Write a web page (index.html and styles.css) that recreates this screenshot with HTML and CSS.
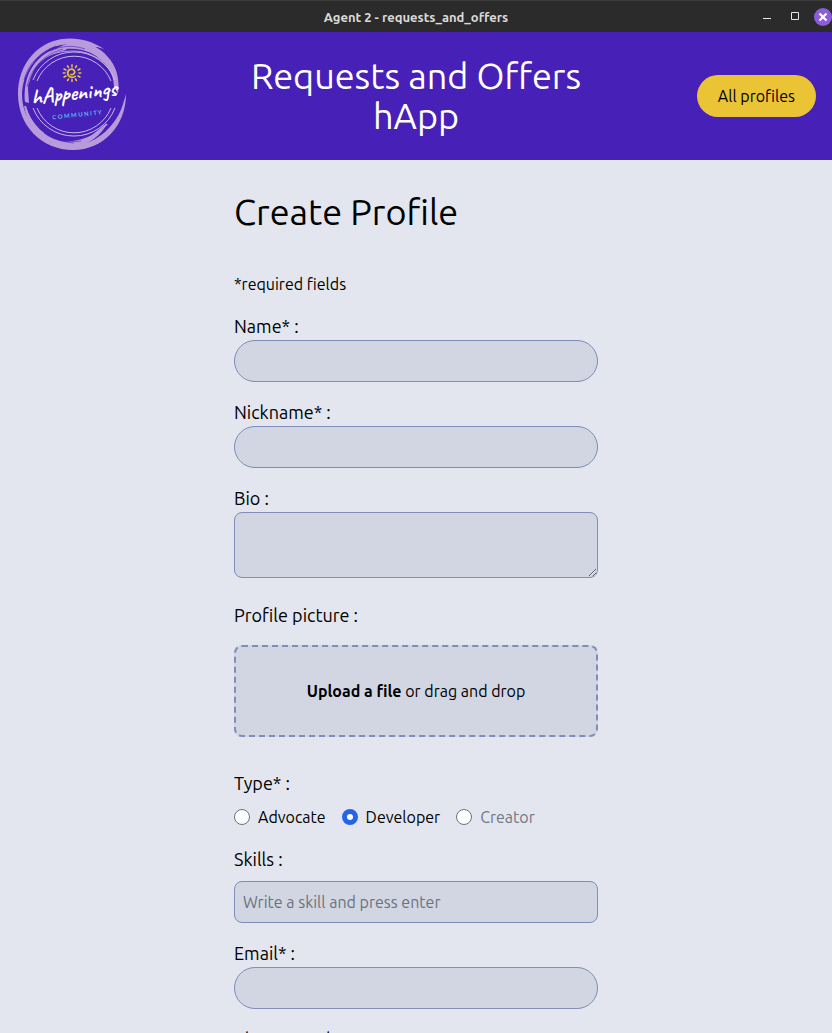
FILE: index.html
```html
<!DOCTYPE html>
<html lang="en">
<head>
<meta charset="utf-8">
<meta name="viewport" content="width=device-width, initial-scale=1">
<title>Agent 2 - requests_and_offers</title>
<link rel="stylesheet" href="styles.css">
</head>
<body>
<div class="window">
  <div class="titlebar">
    <span class="titlebar-text">Agent 2 - requests_and_offers</span>
    <div class="window-controls">
      <button class="window-button" type="button" aria-label="Minimize"><svg width="18" height="18" viewBox="0 0 18 18"><path d="M5 10.500h8" stroke="#e6e6e2" fill="none"/></svg></button>
      <button class="window-button" type="button" aria-label="Maximize"><svg width="18" height="18" viewBox="0 0 18 18"><path d="M5.500 4.500h7v7h-7z" stroke="#e6e6e2" fill="none"/></svg></button>
      <button class="window-button" type="button" aria-label="Close"><svg width="18" height="18" viewBox="0 0 18 18"><circle cx="9" cy="9" r="9" fill="#8c5dd9"/><path d="M5.500 5.500l7 7M12.500 5.500l-7 7" stroke="#fff" stroke-width="2.200" fill="none"/></svg></button>
    </div>
  </div>

  <header class="header">
    <a class="logo-link" href="#" aria-label="hAppenings Community">
      <svg class="logo" width="112" height="114" viewBox="0 -1 112 114">
        <g fill="#b99bdc">
          <path d="M88 9C75 0 60-3 46-1C20 3 2 25 2 54C2 86 26 110 57 110C87 110 110 86 110 54C107 64 105 73 98 82C87 97 72 105 57 105C30 105 7 84 6 56C6 31 23 9 45 5C57 3 67 4 75 8L81 7Z"/>
          <path d="M55 3C70 1 83 7 91 16C101 26 104 40 102 54L98 47C98 32 88 20 75 13C60 6 43 8 30 16C40 7 48 5 55 3Z"/>
          <path d="M10 66C15 84 30 98 45 101C61 103 76 97 90 86C80 101 64 109 49 108C27 106 12 89 10 66Z"/>
          <path d="M9 62C7 40 15 22 32 12L42 8C25 16 13 31 12 49L13 63Z"/>
        </g>
        <g fill="none" stroke="#b99bdc">
          <path d="M12 43C16 26 27 14 44 10M15 33C23 18 35 12 50 9M9 66C12 85 26 99 44 105M75 97L91 84M14 79C22 95 38 103 56 103" stroke-width="2"/>
          <path d="M25 21C34 13 45 11 58 11C69 11 80 16 87 22" stroke-width="1"/>
        </g>
        <g fill="none" stroke="#4720b7" stroke-width="0.600">
          <path d="M8 40C12 24 24 12 40 6M11 47C15 27 29 14 47 9M39 9C51 5 60 6 69 9M25 88C33 96 43 102 58 103M28 93C39 101 50 103 65 101"/>
        </g>
        <g fill="none" stroke="#c9b8e8" stroke-width="1">
          <path d="M17 40A44 44 0 0 1 99 40M17 68A44 44 0 0 0 99 68"/>
          <path d="M21 41A40 40 0 0 1 95 41M21 68A40 40 0 0 0 95 68"/>
        </g>
        <g fill="none" stroke="#eac435" stroke-linecap="round">
          <path d="M55 34.500c2.500 1 5-2 3-4.200c-2.400-2.500-6.500-.5-6.300 2.900c.2 3.600 4.400 5.400 7.500 3.200" stroke-width="1.700"/>
          <path d="M56 27v-2.300M59.500 27.500l1-1.700M62 30l2-1M63 33h1.800M62 36l2 1M59.500 39l1 1.700M56 39.700v1.800M52.500 39l-1 1.700M50 36l-2 1M49 33h-1.800M50 30l-2-1M52.500 27.500l-1-1.700" stroke-width="1.500"/>
        </g>
        <text class="logo-name" x="58" y="60" text-anchor="middle" transform="rotate(-6 58 54)">hAppenings</text>
        <text class="logo-tag" x="61" y="77" text-anchor="middle" transform="rotate(-6 61 75)">C O M M U N I T Y</text>
      </svg>
    </a>
    <h1 class="app-title">Requests and Offers hApp</h1>
    <button class="profiles-button" type="button">All profiles</button>
  </header>

  <main class="content">
    <form class="form">
      <h2 class="form-title">Create Profile</h2>
      <p class="form-note">*required fields</p>
      <div class="field">
        <label class="label" for="name">Name* :</label>
        <input class="input pill" id="name" type="text" required>
      </div>
      <div class="field">
        <label class="label" for="nickname">Nickname* :</label>
        <input class="input pill" id="nickname" type="text" required>
      </div>
      <div class="field">
        <label class="label" for="bio">Bio :</label>
        <textarea class="input textarea" id="bio"></textarea>
      </div>
      <div class="field upload-field">
        <label class="label" for="picture">Profile picture :</label>
        <div class="dropzone">
          <p class="dropzone-text"><strong>Upload a file</strong> or drag and drop</p>
          <input class="dropzone-input" id="picture" type="file" accept="image/*">
        </div>
      </div>
      <fieldset class="field spaced type-field">
        <legend class="label">Type* :</legend>
        <div class="radios">
          <label class="radio-label"><input class="radio" type="radio" name="type" value="advocate">Advocate</label>
          <label class="radio-label"><input class="radio" type="radio" name="type" value="developer" checked>Developer</label>
          <label class="radio-label disabled"><input class="radio" type="radio" name="type" value="creator" disabled>Creator</label>
        </div>
      </fieldset>
      <div class="field spaced">
        <label class="label" for="skills">Skills :</label>
        <input class="input" id="skills" type="text" placeholder="Write a skill and press enter">
      </div>
      <div class="field">
        <label class="label" for="email">Email* :</label>
        <input class="input pill" id="email" type="email" required>
      </div>
      <div class="field">
        <label class="label" for="phone">Phone number :</label>
        <input class="input pill" id="phone" type="tel">
      </div>
    </form>
  </main>
</div>
</body>
</html>
```

FILE: styles.css
```css
* {
  box-sizing: border-box;
}

body {
  margin: 0;
  background: #e3e6ee;
  color: #000;
  font-family: Ubuntu, "Noto Sans", sans-serif;
  font-size: 16px;
  line-height: 24px;
}

h1, h2, p {
  margin: 0;
  font-weight: 400;
}

button, input, textarea {
  font: inherit;
  color: inherit;
}

.window {
  display: flex;
  flex-direction: column;
  height: 100vh;
}

.titlebar {
  display: grid;
  grid-template-columns: 1fr auto 1fr;
  align-items: center;
  flex: none;
  height: 32px;
  background: #2b2b2b;
  border-top: 1px solid #3c3c3c;
  color: #dadada;
}

.titlebar-text {
  grid-column: 2;
  font-size: 13px;
  font-weight: 700;
  line-height: 22px;
}

.window-controls {
  display: flex;
  justify-content: flex-end;
  gap: 10px;
}

.window-button {
  display: flex;
  padding: 0;
  border: 0;
  background: none;
}

.header {
  display: grid;
  grid-template-columns: 1fr minmax(0, 352px) 1fr;
  align-items: center;
  flex: none;
  min-height: 128px;
  padding: 0 16px;
  background: #4720b7;
}

.logo-link,
.logo {
  display: block;
}

.logo-link {
  justify-self: start;
}

.logo {
  overflow: visible;
}

.logo-name {
  fill: #fff;
  font: 700 22px Caveat, Kalam, "Comic Neue", cursive;
}

.logo-tag {
  fill: #55b9ee;
  font: 700 6px Lato, sans-serif;
}

.app-title {
  color: #fff;
  font-size: 36px;
  line-height: 40px;
  text-align: center;
}

.profiles-button {
  justify-self: end;
  padding: 9px 21px;
  border: 0;
  border-radius: 21px;
  background: #eac435;
}

.content {
  flex: 1;
  min-height: 0;
  padding: 32px 16px;
  overflow-y: auto;
  scrollbar-width: none;
}

.form {
  display: flex;
  flex-direction: column;
  gap: 16px;
  max-width: 364px;
  margin: 0 auto;
}

.form-title {
  margin-bottom: 24px;
  font-size: 36px;
  line-height: 40px;
}

.field {
  display: flex;
  flex-direction: column;
  min-width: 0;
  margin: 0;
  padding: 0;
  border: 0;
}

.spaced {
  gap: 8px;
}

.label {
  padding: 0;
  font-size: 18px;
  line-height: 28px;
}

.input {
  width: 100%;
  height: 42px;
  padding: 8px;
  border: 1px solid #7f8db8;
  border-radius: 8px;
  background: #d2d6e2;
}

.pill {
  padding: 8px 16px;
  border-radius: 21px;
}

.textarea {
  display: block;
  height: 66px;
}

.input::placeholder {
  color: #6b7280;
  opacity: 1;
}

.upload-field {
  gap: 16px;
  margin: 7px 0 16px;
}

.dropzone {
  position: relative;
  display: flex;
  align-items: center;
  justify-content: center;
  min-height: 92px;
  padding: 16px;
  border: 2px dashed #7f8db8;
  border-radius: 8px;
  background: #d2d6e2;
}

.dropzone-input {
  position: absolute;
  inset: 0;
  width: 100%;
  opacity: 0;
}

.type-field .label {
  margin-bottom: 8px;
}

.radios {
  display: flex;
  flex-wrap: wrap;
  gap: 16px;
}

.radio-label {
  display: flex;
  align-items: center;
  gap: 8px;
}

.disabled {
  color: #717785;
}

.radio {
  appearance: none;
  width: 16px;
  height: 16px;
  margin: 0;
  border: 1px solid #6b7280;
  border-radius: 50%;
  background: #fff;
}

.radio:checked {
  border: 5px solid #2563eb;
}
```
